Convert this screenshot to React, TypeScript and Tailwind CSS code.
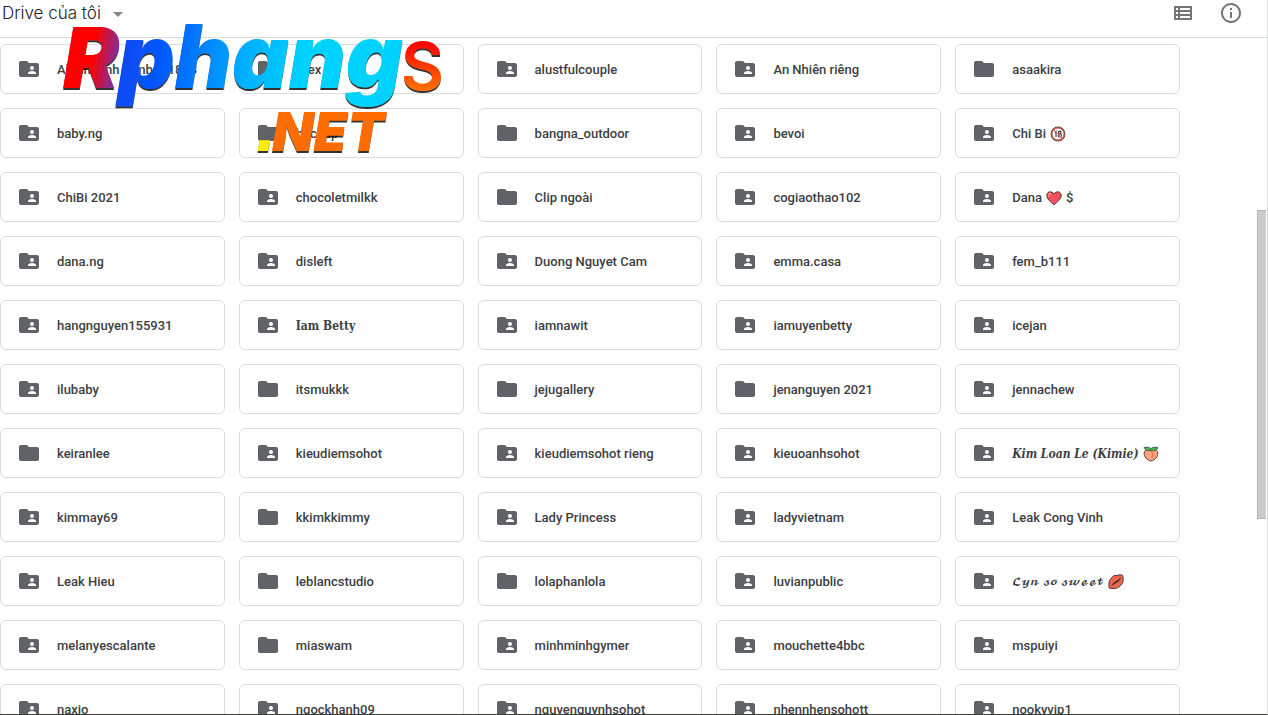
import { clsx } from "clsx";

type Mark = "adult" | "heart" | "peach" | "kiss";
type Face = "bold" | "italic" | "script";
type Folder = { name: string; shared: boolean; mark?: Mark; tail?: string; face?: Face };

const shared = (name: string, extra: Partial<Folder> = {}): Folder => ({ name, shared: true, ...extra });
const own = (name: string): Folder => ({ name, shared: false });

const folders: Folder[] = [
	shared("Album ảnh Kimber 1883"), own("Alex"), shared("alustfulcouple"), shared("An Nhiên riêng"), own("asaakira"),
	shared("baby.ng"), own("backup"), own("bangna_outdoor"), shared("bevoi"), shared("Chi Bi", { mark: "adult" }),
	shared("ChiBi 2021"), shared("chocoletmilkk"), own("Clip ngoài"), shared("cogiaothao102"), shared("Dana", { mark: "heart", tail: "$" }),
	shared("dana.ng"), shared("disleft"), shared("Duong Nguyet Cam"), shared("emma.casa"), shared("fem_b111"),
	shared("hangnguyen155931"), shared("Iam Betty", { face: "bold" }), shared("iamnawit"), shared("iamuyenbetty"), shared("icejan"),
	shared("ilubaby"), own("itsmukkk"), own("jejugallery"), own("jenanguyen 2021"), shared("jennachew"),
	own("keiranlee"), shared("kieudiemsohot"), shared("kieudiemsohot rieng"), shared("kieuoanhsohot"), shared("Kim Loan Le (Kimie)", { mark: "peach", face: "italic" }),
	shared("kimmay69"), own("kkimkkimmy"), shared("Lady Princess"), shared("ladyvietnam"), shared("Leak Cong Vinh"),
	shared("Leak Hieu"), own("leblancstudio"), own("lolaphanlola"), shared("luvianpublic"), shared("𝓛𝔂𝓷 𝓼𝓸 𝓼𝔀𝓮𝓮𝓽", { mark: "kiss", face: "script" }),
	shared("melanyescalante"), own("miaswam"), shared("minhminhgymer"), shared("mouchette4bbc"), shared("mspuiyi"),
	shared("naxio"), shared("ngockhanh09"), shared("nguyenquynhsohot"), shared("nhennhensohott"), shared("nookyvip1"),
];

const faces: Record<Face, string> = {
	bold: "font-['DejaVu_Serif_Condensed','Liberation_Serif',serif] text-xs leading-5 font-bold",
	italic: "font-['DejaVu_Serif_Condensed','Liberation_Serif',serif] text-xs leading-5 font-bold italic",
	script: "font-['DejaVu_Math_TeX_Gyre',serif] text-[10px] leading-5 font-normal",
};

function FolderIcon({ shared }: { shared: boolean }) {
	return (
		<svg viewBox="0 0 24 24" className="size-6 shrink-0 fill-[#5f6368]" aria-hidden="true">
			{shared
				? <path d="M20 6h-8l-2-2H4c-1.1 0-2 .9-2 2v12c0 1.1.9 2 2 2h16c1.1 0 2-.9 2-2V8c0-1.1-.9-2-2-2zm-5 3c1.1 0 2 .9 2 2s-.9 2-2 2-2-.9-2-2 .9-2 2-2zm4 8h-8v-1c0-1.33 2.67-2 4-2s4 .67 4 2v1z" />
				: <path d="M10 4H4c-1.1 0-2 .9-2 2v12c0 1.1.9 2 2 2h16c1.1 0 2-.9 2-2V8c0-1.1-.9-2-2-2h-8l-2-2z" />}
		</svg>
	);
}

function MarkIcon({ mark }: { mark: Mark }) {
	return (
		<svg viewBox="0 0 16 16" className="size-4 shrink-0" role="img" aria-label={mark}>
			{mark === "adult" && <>
				<circle cx="8" cy="8" r="6.6" fill="#fff" stroke="#4a3a38" strokeWidth="1.6" />
				<circle cx="8" cy="8" r="6.2" fill="none" stroke="#e8604c" strokeWidth="1.1" />
				<path d="M4.600 6.200L6 5.200v5.800M9.700 5.100a1.300 1.300 0 1 0 .1 0zm0 2.700a1.600 1.600 0 1 0 .1 0z" fill="none" stroke="#333" strokeWidth="1.1" />
				<path d="M3.600 3.600l8.800 8.800" stroke="#e8604c" strokeWidth="1" />
			</>}
			{mark === "heart" && <>
				<path d="M8 14.800C4.500 11.800 .8 9 .8 5.300 .8 1.300 6 .6 8 4c2-3.400 7.200-2.700 7.200 1.300 0 3.700-3.700 6.500-7.200 9.500z" fill="#f2505d" stroke="#4a3a3c" strokeWidth="1" />
				<path d="M3 7C2.300 4.500 3.500 3.500 5 3.500" fill="none" stroke="#ff9a78" strokeWidth="1.300" />
			</>}
			{mark === "peach" && <>
				<path d="M8 15C3.500 14 1 10.500 1.200 7 1.400 3.500 5 2.500 8 4.500c3-2 6.600-1 6.800 2.500.2 3.500-2.300 7-6.800 8z" fill="#ffa47c" stroke="#5a463c" strokeWidth="1" />
				<path d="M8 5c2.200 2 2.200 5 .6 7" fill="none" stroke="#e8604c" strokeWidth="1" />
				<path d="M1 1.500c3-.8 5.500-.3 7 1.200 1.500-1.500 4-2 7-1.200-.8 3-4.500 4-7 2.700C5.500 5.500 1.800 4.500 1 1.500z" fill="#4fae57" stroke="#3d5540" strokeWidth=".8" />
			</>}
			{mark === "kiss" && <>
				<path d="M1.200 14C.3 9 1.200 6 3.500 4 5 1.500 7 1 9 1.600c2-1 4-1 5.700-.2 1 4.600.3 7.600-1.700 9.600-2 3-6.500 4.500-11.800 3z" fill="#f2664e" stroke="#4a3a38" strokeWidth="1" />
				<path d="M3 12C5 9.500 6 7.500 9 6.500c1.500-.5 2.500-2 4-3.500-1 3.500-2 4.500-4 5.500-2 1-3.500 2.500-6 3.500z" fill="#3c3030" />
			</>}
		</svg>
	);
}

function FolderCard({ folder }: { folder: Folder }) {
	return (
		<button type="button" className="flex h-[50px] min-w-0 items-center gap-4 rounded-md border border-[#dadce0] bg-white px-4 text-left text-[13px] font-medium text-[#3c4043]">
			<FolderIcon shared={folder.shared} />
			<span className="flex min-w-0 items-center gap-1 whitespace-nowrap pt-0.5">
				<span className={clsx(folder.face && faces[folder.face])}>{folder.name}</span>
				{folder.mark && <MarkIcon mark={folder.mark} />}
				{folder.tail && <span>{folder.tail}</span>}
			</span>
		</button>
	);
}

function Header() {
	return (
		<header className="flex h-[38px] shrink-0 items-start justify-between border-b border-[#dadce0] pr-6">
			<button type="button" className="flex h-7 items-center gap-3 pl-0.5 font-['Inter',sans-serif] text-[17px] font-light text-[#202124]">
				Drive của tôi
				<svg viewBox="0 0 10 5" className="h-[5px] w-[10px] fill-[#80868b]" aria-hidden="true"><path d="M0 0h10L5 5z" /></svg>
			</button>
			<div className="flex h-[26px] items-center gap-6">
				<button type="button" aria-label="List view">
					<svg viewBox="0 0 24 24" className="size-6 fill-[#757575]"><path fillRule="evenodd" d="M3 5h18v14H3zM5 7v2h2V7zM9 7v2h10V7zM5 11v2h2v-2zM9 11v2h10v-2zM5 15v2h2v-2zM9 15v2h10v-2z" /></svg>
				</button>
				<button type="button" aria-label="View details">
					<svg viewBox="0 0 24 24" className="size-6 fill-[#757575]"><path d="M11 7h2v2h-2zm0 4h2v6h-2zm1-9C6.480 2 2 6.480 2 12s4.480 10 10 10 10-4.480 10-10S17.520 2 12 2zm0 18c-4.410 0-8-3.590-8-8s3.590-8 8-8 8 3.590 8 8-3.590 8-8 8z" /></svg>
				</button>
			</div>
		</header>
	);
}

function Watermark() {
	return (
		<svg viewBox="0 0 390 140" className="pointer-events-none absolute left-[60px] top-5 h-[140px] w-[390px] font-['Inter',sans-serif]" role="img" aria-label="Rphangs.NET">
			<defs>
				<linearGradient id="cap" x1="0" y1="0" x2="1" y2=".3">
					<stop offset=".6" stopColor="#ff0000" />
					<stop offset="1" stopColor="#8030a0" />
				</linearGradient>
				<linearGradient id="word" gradientUnits="userSpaceOnUse" x1="60" y1="20" x2="342" y2="60">
					<stop offset="0" stopColor="#1048f0" />
					<stop offset=".15" stopColor="#0058ff" />
					<stop offset=".45" stopColor="#00b0ff" />
					<stop offset=".65" stopColor="#00d2ff" />
				</linearGradient>
				<linearGradient id="tail" x1="0" y1="0" x2="0" y2="1">
					<stop offset=".2" stopColor="#ff0000" />
					<stop offset=".8" stopColor="#ff7000" />
				</linearGradient>
				<filter id="edge" x="-5%" y="-5%" width="110%" height="115%">
					<feDropShadow dx="0" dy="2" stdDeviation=".6" floodColor="#111" floodOpacity=".85" />
				</filter>
			</defs>
			<g filter="url(#edge)">
				<text x="3" y="68" fill="url(#cap)" className="text-[84px] font-black italic">R</text>
				<text x="58" y="68" fill="url(#word)" className="text-[88px] font-black italic">phang</text>
				<text x="341" y="70" fill="url(#tail)" className="text-[66px] font-semibold">S</text>
				<text x="196" y="131" fill="#ffee00" className="font-['Liberation_Sans',sans-serif] text-[72px] font-bold italic">.</text>
				<text x="212" y="131" fill="#ff6d00" className="text-[54px] font-black italic">NET</text>
			</g>
		</svg>
	);
}

export default function App() {
	return (
		<div className="relative flex h-screen flex-col overflow-hidden border-b border-r border-b-[#3c4238] border-r-[#dadce0] bg-white font-['Roboto',sans-serif]">
			<Header />
			<div className="flex min-h-0 flex-1">
				<main className="min-w-0 flex-1 overflow-hidden pt-1.5">
					<div className="grid grid-cols-5 gap-[14px]">
						{folders.map((folder) => <FolderCard key={folder.name} folder={folder} />)}
					</div>
				</main>
				<div className="flex w-[87px] shrink-0 flex-col items-end pr-px pt-[172px]">
					<div className="h-[309px] w-[9px] border border-r-0 border-[#b4b4b4] bg-[#cccccc]" />
				</div>
			</div>
			<Watermark />
		</div>
	);
}
